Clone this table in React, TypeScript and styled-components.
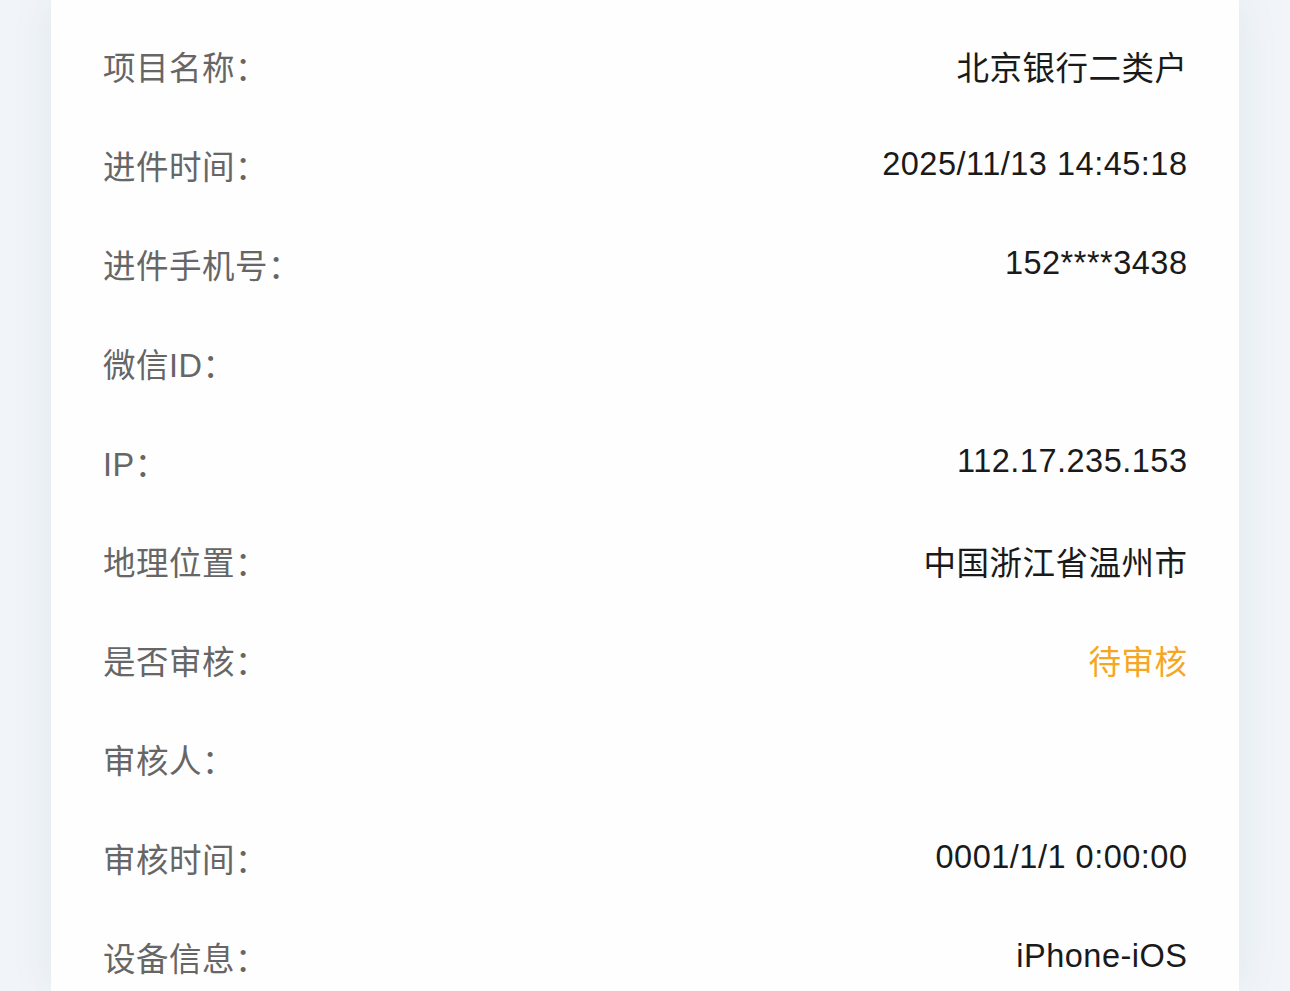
import React from "react";
import styled, { createGlobalStyle } from "styled-components";

const GlobalStyle = createGlobalStyle`
  html, body {
    margin: 0;
    padding: 0;
    background: #f1f5f9;
    overflow: hidden;
  }
  body {
    font-family: "Liberation Sans", "Noto Sans CJK SC", sans-serif;
  }
`;

const Page = styled.div`
  width: 1290px;
  height: 991px;
  padding: 0 51px;
  box-sizing: border-box;
  background: #f1f5f9;
  overflow: hidden;
`;

const Card = styled.div`
  background: #fefefe;
  height: 100%;
  padding: 16px 52px 0;
  box-sizing: border-box;
  box-shadow: 0 0 40px rgba(40, 70, 110, 0.08);
  display: flex;
  flex-direction: column;
`;

const Row = styled.div`
  height: 99px;
  display: flex;
  align-items: center;
  justify-content: space-between;
  font-size: 32.5px;
  letter-spacing: 0.5px;
  flex-shrink: 0;
`;

const Label = styled.span`
  color: #666666;
`;

const Value = styled.span<{ $tone?: "warn" }>`
  color: ${(p) => (p.$tone === "warn" ? "#f5a623" : "#1a1a1a")};
  text-align: right;
  margin-right: -0.5px;
`;

type Item = { label: string; value: string; tone?: "warn" };

const items: Item[] = [
  { label: "项目名称：", value: "北京银行二类户" },
  { label: "进件时间：", value: "2025/11/13 14:45:18" },
  { label: "进件手机号：", value: "152****3438" },
  { label: "微信ID：", value: "" },
  { label: "IP：", value: "112.17.235.153" },
  { label: "地理位置：", value: "中国浙江省温州市" },
  { label: "是否审核：", value: "待审核", tone: "warn" },
  { label: "审核人：", value: "" },
  { label: "审核时间：", value: "0001/1/1 0:00:00" },
  { label: "设备信息：", value: "iPhone-iOS" },
];

export default function App() {
  return (
    <>
      <GlobalStyle />
      <Page>
        <Card>
          {items.map((it) => (
            <Row key={it.label}>
              <Label>{it.label}</Label>
              <Value $tone={it.tone}>{it.value}</Value>
            </Row>
          ))}
        </Card>
      </Page>
    </>
  );
}
